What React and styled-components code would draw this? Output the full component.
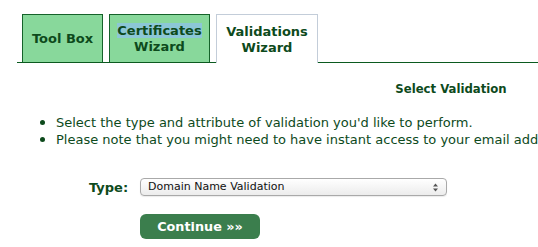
import React from "react";
import styled, { createGlobalStyle } from "styled-components";

const GlobalStyle = createGlobalStyle`
    body {
        margin: 0;
        background: #ffffff;
        font-family: "DejaVu Sans", Verdana, sans-serif;
        color: #0d4a1c;
        overflow: hidden;
    }
`
const Page = styled.div`
    width: 902px;
    padding-top: 14px;
`
const TabBar = styled.div`
    display: flex;
    align-items: flex-end;
    margin-left: 17px;
    padding-left: 5px;
    gap: 6px;
    border-bottom: 1px solid #0b5a1f;
    height: 48px;
`
const Tab = styled.div`
    box-sizing: border-box;
    width: ${p => p.width}px;
    height: ${p => (p.active ? 49 : 48)}px;
    margin-bottom: ${p => (p.active ? -1 : 0)}px;
    display: flex;
    align-items: center;
    justify-content: center;
    text-align: center;
    font-weight: bold;
    font-size: 13px;
    line-height: 16px;
    padding-top: ${p => (p.active ? 2 : 0)}px;
    background: ${p => (p.active ? "#ffffff" : "#88d89b")};
    border: 1px solid ${p => (p.active ? "#c3cdd9" : "#15622a")};
    border-bottom: ${p => (p.active ? "none" : "0")};
`
const Highlight = styled.span`
    background: #8cc7d6;
`
const Content = styled.div`
    padding-top: 18px;
`
const Heading = styled.h3`
    margin: 0;
    text-align: center;
    font-size: 11.7px;
    font-weight: bold;
    line-height: 16px;
`
const Notes = styled.ul`
    margin: 17px 0 0;
    padding-left: 56px;
    font-size: 13px;
    line-height: 16px;
    white-space: nowrap;
    li::marker {
        font-size: 15px;
    }
`
const FormRow = styled.div`
    display: flex;
    align-items: center;
    margin-top: 30px;
    padding-left: 89px;
    gap: 11px;
`
const Label = styled.label`
    font-weight: bold;
    font-size: 13px;
    width: 40px;
`
const SelectBox = styled.div`
    position: relative;
    box-sizing: border-box;
    width: 307px;
    height: 18px;
    border: 1px solid #a9a9a9;
    border-radius: 4px;
    background: linear-gradient(#ffffff, #ececec);
    color: #111;
    font-size: 11px;
    line-height: 16px;
    padding-left: 7px;
    box-shadow: 0 1px 1px rgba(0, 0, 0, 0.08);
`
const Arrows = styled.svg`
    position: absolute;
    right: 8px;
    top: 4px;
`
const ButtonRow = styled.div`
    padding-left: 140px;
    margin-top: 18px;
`
const Button = styled.button`
    width: 120px;
    height: 25px;
    border: none;
    border-radius: 6px;
    background: #3b7e4d;
    color: #ffffff;
    font-family: "DejaVu Sans", Verdana, sans-serif;
    font-weight: bold;
    font-size: 12.8px;
    padding: 0;
`

export default function App() {
    return (
        <Page>
            <GlobalStyle />
            <TabBar>
                <Tab width={81}>Tool Box</Tab>
                <Tab width={101}>
                    <span><Highlight>Certificates</Highlight><br />Wizard</span>
                </Tab>
                <Tab width={102} active>
                    <span>Validations<br />Wizard</span>
                </Tab>
            </TabBar>
            <Content>
                <Heading>Select Validation</Heading>
                <Notes>
                    <li>Select the type and attribute of validation you'd like to perform.</li>
                    <li>Please note that you might need to have instant access to your email address.</li>
                </Notes>
                <FormRow>
                    <Label>Type:</Label>
                    <SelectBox>
                        Domain Name Validation
                        <Arrows width="5" height="9" viewBox="0 0 5 9">
                            <path d="M0 3.5 L2.5 0.5 L5 3.5 Z M0 5.5 L2.5 8.5 L5 5.5 Z" fill="#555" />
                        </Arrows>
                    </SelectBox>
                </FormRow>
                <ButtonRow>
                    <Button>Continue »»</Button>
                </ButtonRow>
            </Content>
        </Page>
    );
}
